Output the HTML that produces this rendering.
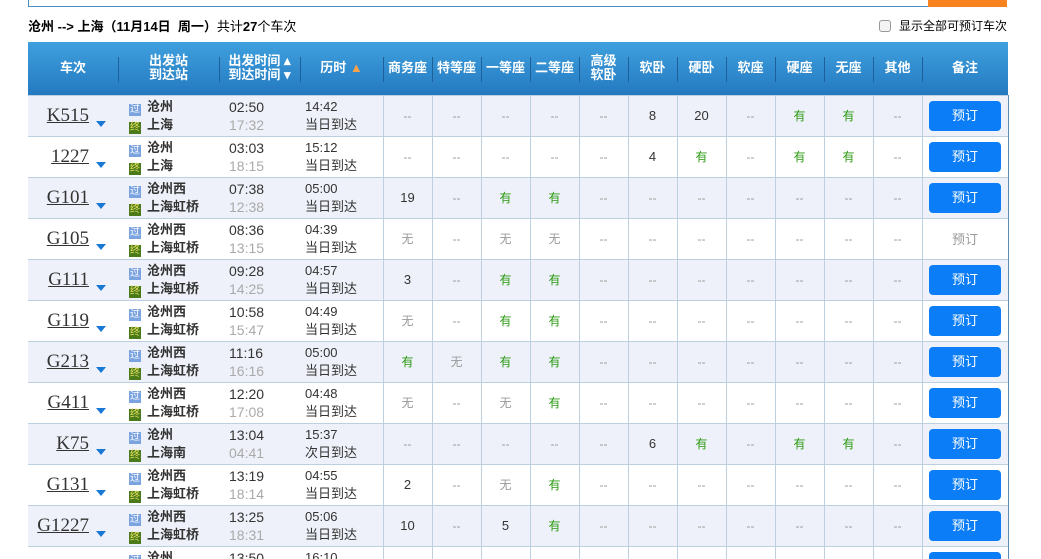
<!DOCTYPE html>
<html><head><meta charset="utf-8"><style>
*{margin:0;padding:0;box-sizing:border-box}
html,body{width:1041px;height:559px;overflow:hidden}
body{background:#fff;font-family:"Liberation Sans","Noto Sans CJK SC",sans-serif;font-size:13px;color:#333;position:relative}
.inp{position:absolute;left:28px;top:-2px;width:952px;height:9px;border:1px solid #4a90c8;border-top:none}
.obtn{position:absolute;left:928px;top:0;width:79px;height:7px;background:#f7821e}
.title{position:absolute;left:28px;top:16px;font-size:13px;color:#000}
.title b{font-weight:bold}
.chk{position:absolute;left:879px;top:17px;font-size:12px;color:#000;white-space:nowrap}
.chk i{display:inline-block;width:12px;height:12px;border:1px solid #999;border-radius:3px;background:#f4f4f4;vertical-align:-2px;margin-right:8px}
table{position:absolute;left:28px;top:42px;border-collapse:collapse;table-layout:fixed;width:980px}
th{height:53px;background:linear-gradient(#3fa0de,#2c85c9 70%,#2479c0);color:#fff;font-size:13px;font-weight:bold;line-height:14px;position:relative}
th+th:before{content:"";position:absolute;left:0;top:15px;height:25px;border-left:1px solid #1f5f9a}
td{height:41px;border-top:1px solid #bcd0df;text-align:center;color:#999;font-size:12px}
td.s{border-left:1px solid #bcd0df}
tr td{background:#fff}
tr.o td{background:#eef1f9}
td.tn{font-family:"Liberation Serif","Noto Serif CJK SC",serif;font-size:19px;color:#333;text-align:right;padding-right:1px;position:relative}
td.tn u{text-decoration:underline;margin-right:28px}
td.tn .ar{position:absolute;left:68px;top:25px;border:5px solid transparent;border-top:6px solid #1978d4;border-bottom:0}
td.st{text-align:left;color:#333;font-size:13px;line-height:18px;font-weight:bold;padding-left:11px}
.ic{display:inline-block;width:12px;height:12px;font-size:10px;line-height:12px;text-align:center;color:#fff;vertical-align:-1px;margin-right:6px;font-weight:normal}
.g{background:#7ba3e0}.z{background:#4a7a1a;color:#e8e060}
td.tm{text-align:left;padding-left:10px;font-size:14px;line-height:18px;color:#333}
td.tm span{color:#aaa}
td.du{text-align:left;padding-left:5px;font-size:13px;line-height:18px;color:#333}
.y{color:#2a9a10}.n{color:#333;font-size:13px}.w{color:#999}
.b{display:inline-block;width:72px;height:30px;line-height:30px;background:#0b7ef7;color:#fff;border-radius:4px;font-size:13px}
td.last{border-right:1px solid #5a8db5}
</style></head><body>
<div class="inp"></div><div class="obtn"></div>
<div class="title"><b>沧州 --> 上海（11月14日&nbsp; 周一）</b>共计<b>27</b>个车次</div>
<div class="chk"><i></i>显示全部可预订车次</div>
<table>
<colgroup><col style="width:90px"><col style="width:101px"><col style="width:81px"><col style="width:83px"><col span="11" style="width:49px"><col style="width:86px"></colgroup>
<tr><th>车次</th><th>出发站<br>到达站</th><th>出发时间 ▴<br>到达时间 ▾</th><th>历时 <span style="color:#f7a04a">▲</span></th><th>商务座</th><th>特等座</th><th>一等座</th><th>二等座</th><th>高级<br>软卧</th><th>软卧</th><th>硬卧</th><th>软座</th><th>硬座</th><th>无座</th><th>其他</th><th>备注</th></tr>
</table>
<script>
var R=[
["K515","沧州","上海","02:50","17:32","14:42","当日到达","-,-,-,-,-,8,20,-,有,有,-",1],
["1227","沧州","上海","03:03","18:15","15:12","当日到达","-,-,-,-,-,4,有,-,有,有,-",1],
["G101","沧州西","上海虹桥","07:38","12:38","05:00","当日到达","19,-,有,有,-,-,-,-,-,-,-",1],
["G105","沧州西","上海虹桥","08:36","13:15","04:39","当日到达","无,-,无,无,-,-,-,-,-,-,-",0],
["G111","沧州西","上海虹桥","09:28","14:25","04:57","当日到达","3,-,有,有,-,-,-,-,-,-,-",1],
["G119","沧州西","上海虹桥","10:58","15:47","04:49","当日到达","无,-,有,有,-,-,-,-,-,-,-",1],
["G213","沧州西","上海虹桥","11:16","16:16","05:00","当日到达","有,无,有,有,-,-,-,-,-,-,-",1],
["G411","沧州西","上海虹桥","12:20","17:08","04:48","当日到达","无,-,无,有,-,-,-,-,-,-,-",1],
["K75","沧州","上海南","13:04","04:41","15:37","次日到达","-,-,-,-,-,6,有,-,有,有,-",1],
["G131","沧州西","上海虹桥","13:19","18:14","04:55","当日到达","2,-,无,有,-,-,-,-,-,-,-",1],
["G1227","沧州西","上海虹桥","13:25","18:31","05:06","当日到达","10,-,5,有,-,-,-,-,-,-,-",1],
["G115","沧州","上海","13:50","18:40","16:10","当日到达","-,-,-,-,-,-,-,-,-,-,-",1]];
var t=document.querySelector("table"),h="";
R.forEach(function(r,i){
 var c=r[7].split(",");
 h+='<tr class="'+(i%2==0?'o':'')+'"><td class="tn"><u>'+r[0]+'</u><i class="ar"></i></td>';
 h+='<td class="st"><span class="ic g">过</span>'+r[1]+'<br><span class="ic z">终</span>'+r[2]+'</td>';
 h+='<td class="tm">'+r[3]+'<br><span>'+r[4]+'</span></td><td class="du">'+r[5]+'<br>'+r[6]+'</td>';
 c.forEach(function(x){var k=x=='有'?'y':(x=='-'||x=='无')?'w':'n';h+='<td class="s '+k+'">'+(x=='-'?'--':x)+'</td>';});
 h+='<td class="s last">'+(r[8]?'<span class="b">预订</span>':'<span class="w" style="font-size:13px">预订</span>')+'</td></tr>';
});
t.insertAdjacentHTML("beforeend",h);
</script>
</body></html>
